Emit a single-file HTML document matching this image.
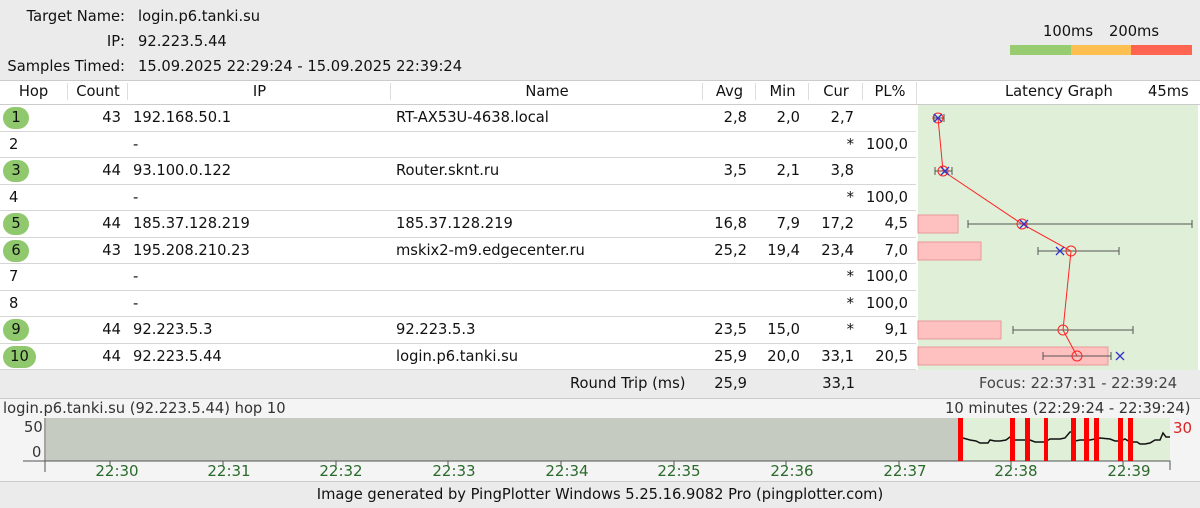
<!DOCTYPE html><html><head><meta charset="utf-8"><style>
body{margin:0;width:1200px;height:508px;overflow:hidden;background:#ebebeb;font-family:"DejaVu Sans","Liberation Sans",sans-serif;font-size:14.7px;color:#111;position:relative}
.a{position:absolute;white-space:nowrap}
.r{text-align:right}
.c{text-align:center}
.row{position:absolute;left:0;width:916px;height:26px;background:#fff;border-bottom:1px solid #d6d6d6;box-sizing:border-box}
.hop{position:absolute;left:3px;top:2px;width:26px;height:22px;border-radius:12px;background:#8fc86d;text-align:center;line-height:22px}
</style></head><body>
<div class="a r" style="right:1075px;top:8px">Target Name:</div>
<div class="a r" style="right:1075px;top:33px">IP:</div>
<div class="a r" style="right:1075px;top:58px">Samples Timed:</div>
<div class="a" style="left:138px;top:8px">login.p6.tanki.su</div>
<div class="a" style="left:138px;top:33px">92.223.5.44</div>
<div class="a" style="left:138px;top:58px">15.09.2025 22:29:24 - 15.09.2025 22:39:24</div>
<div class="a" style="left:1043px;top:23px">100ms</div><div class="a" style="left:1109px;top:23px">200ms</div>
<div class="a" style="left:1010px;top:45px;width:61px;height:10px;background:#97cc70"></div>
<div class="a" style="left:1071px;top:45px;width:60px;height:10px;background:#fdbf4f"></div>
<div class="a" style="left:1131px;top:45px;width:61px;height:10px;background:#fe6450"></div>
<div class="a" style="left:0;top:80px;width:1200px;height:25px;background:#fff;border-top:1px solid #ccc;border-bottom:1px solid #ccc;box-sizing:border-box"></div>
<div class="a c" style="left:0;width:67px;top:83px">Hop</div>
<div class="a c" style="left:67px;width:60px;top:83px;border-left:1px solid #ddd">Count</div>
<div class="a c" style="left:127px;width:263px;top:83px;border-left:1px solid #ddd">IP</div>
<div class="a c" style="left:390px;width:312px;top:83px;border-left:1px solid #ddd">Name</div>
<div class="a c" style="left:702px;width:53px;top:83px;border-left:1px solid #ddd">Avg</div>
<div class="a c" style="left:755px;width:53px;top:83px;border-left:1px solid #ddd">Min</div>
<div class="a c" style="left:808px;width:54px;top:83px;border-left:1px solid #ddd">Cur</div>
<div class="a c" style="left:862px;width:54px;top:83px;border-left:1px solid #ddd">PL%</div>
<div class="a" style="left:916px;top:82px;height:22px;border-left:1px solid #ddd"></div>
<div class="a" style="left:1005px;top:83px">Latency Graph</div><div class="a" style="left:1148px;top:83px">45ms</div>
<div id="rows"></div>
<div class="a" style="left:916px;top:105px;width:284px;height:265px;background:#fff"></div>
<div class="a" style="left:918px;top:105px;width:280px;height:265px;background:#e0efd8"></div>
<svg class="a" style="left:0;top:0" width="1200" height="508">
<g fill="#ffc0c0" stroke="#e89a9a"><rect x="918" y="215" width="40" height="18"/><rect x="918" y="242" width="63" height="18"/><rect x="918" y="321" width="83" height="18"/><rect x="918" y="347" width="190" height="18"/></g>
<g stroke="#555" stroke-width="1"><path d="M934 118H944M935 171H952M968 224H1192M1038 251H1119M1013 330H1133M1043 356H1111M934 114v8M944 114v8M935 167v8M952 167v8M968 220v8M1192 220v8M1038 247v8M1119 247v8M1013 326v8M1133 326v8M1043 352v8M1111 352v8"/></g>
<polyline fill="none" stroke="#f22" points="938,118 943,171 1022,224 1071,251 1063,330 1077,356"/>
<g fill="none" stroke="#f22"><circle cx="938" cy="118" r="5"/><circle cx="943" cy="171" r="5"/><circle cx="1022" cy="224" r="5"/><circle cx="1071" cy="251" r="5"/><circle cx="1063" cy="330" r="5"/><circle cx="1077" cy="356" r="5"/></g>
<g stroke="#33c" stroke-width="1.3"><path d="M934 114l8 8M942 114l-8 8M941 167l8 8M949 167l-8 8M1020 220l8 8M1028 220l-8 8M1056 247l8 8M1064 247l-8 8M1116 352l8 8M1124 352l-8 8"/></g>
</svg>
<div class="a" style="left:0;top:370px;width:1200px;height:28px;background:#ebebeb"></div>
<div class="a" style="left:570px;top:375px">Round Trip (ms)</div>
<div class="a r" style="right:453px;top:375px">25,9</div><div class="a r" style="right:345px;top:375px">33,1</div>
<div class="a" style="left:979px;top:375px;color:#444">Focus: 22:37:31 - 22:39:24</div>
<div class="a" style="left:0;top:398px;width:1200px;height:84px;background:#f4f4f4;border-top:1px solid #ccc;border-bottom:1px solid #ccc;box-sizing:border-box"></div>
<div class="a" style="left:3px;top:400px;color:#333">login.p6.tanki.su (92.223.5.44) hop 10</div>
<div class="a" style="left:945px;top:400px;color:#333">10 minutes (22:29:24 - 22:39:24)</div>
<div class="a" style="left:24px;top:419px;color:#333">50</div><div class="a" style="left:32px;top:444px;color:#333">0</div>
<div class="a" style="left:1173px;top:419px;color:#d22;font-size:15px">30</div>
<svg class="a" style="left:0;top:0" width="1200" height="508">
<rect x="46" y="418" width="912" height="43" fill="#c5cbc0"/>
<rect x="958" y="418" width="212" height="43" fill="#e0efd8"/>
<path d="M45 418V472M23 461H1170v9" stroke="#555" fill="none"/>
<polyline fill="none" stroke="#111" stroke-width="1.5" points="963,438 970,440 976,441 980,443 988,443 990,440 995,441 1000,441 1006,440 1010,437 1015,440 1030,440 1035,442 1045,442 1050,439 1060,439 1065,438 1070,432 1073,432 1075,441 1080,440 1090,440 1095,439 1100,438 1110,439 1115,441 1120,441 1125,439 1130,442 1137,442 1140,444 1145,444 1150,443 1155,440 1160,440 1163,433 1166,437 1170,437"/>
<g fill="#f00"><rect x="958" y="418" width="5" height="43"/><rect x="1010" y="418" width="5" height="43"/><rect x="1025" y="418" width="5" height="43"/><rect x="1044" y="418" width="4" height="43"/><rect x="1071" y="418" width="5" height="43"/><rect x="1084" y="418" width="5" height="43"/><rect x="1094" y="418" width="5" height="43"/><rect x="1118" y="418" width="5" height="43"/><rect x="1128" y="418" width="5" height="43"/></g>
<g stroke="#555"><path d="M110 461v5M223 461v5M336 461v5M448 461v5M561 461v5M674 461v5M786 461v5M899 461v5M1011 461v5M1123 461v5"/></g>
<g fill="#2a6a2a" font-family="DejaVu Sans" font-size="15" text-anchor="middle"><text x="117" y="476">22:30</text><text x="229" y="476">22:31</text><text x="341" y="476">22:32</text><text x="454" y="476">22:33</text><text x="567" y="476">22:34</text><text x="679" y="476">22:35</text><text x="792" y="476">22:36</text><text x="905" y="476">22:37</text><text x="1016" y="476">22:38</text><text x="1129" y="476">22:39</text></g>
</svg>
<div class="a c" style="left:0;width:1200px;top:486px">Image generated by PingPlotter Windows 5.25.16.9082 Pro (pingplotter.com)</div>
<script>
var d=[[1,43,"192.168.50.1","RT-AX53U-4638.local","2,8","2,0","2,7",""],[2,"","-","","","","*","100,0"],[3,44,"93.100.0.122","Router.sknt.ru","3,5","2,1","3,8",""],[4,"","-","","","","*","100,0"],[5,44,"185.37.128.219","185.37.128.219","16,8","7,9","17,2","4,5"],[6,43,"195.208.210.23","mskix2-m9.edgecenter.ru","25,2","19,4","23,4","7,0"],[7,"","-","","","","*","100,0"],[8,"","-","","","","*","100,0"],[9,44,"92.223.5.3","92.223.5.3","23,5","15,0","*","9,1"],[10,44,"92.223.5.44","login.p6.tanki.su","25,9","20,0","33,1","20,5"]];
var h="";d.forEach(function(r,i){var t=Math.round(105+i*26.5);var ht=Math.round(105+(i+1)*26.5)-t;var g=r[1]!=="";h+='<div class="row" style="top:'+t+'px;height:'+ht+'px">'+(g?'<div class="hop"'+(r[0]==10?' style="width:33px"':'')+'>'+r[0]+'</div>':'<div class="a" style="left:9px;top:4px">'+r[0]+'</div>')+'<div class="a r" style="right:795px;top:4px">'+r[1]+'</div><div class="a" style="left:133px;top:4px">'+r[2]+'</div><div class="a" style="left:396px;top:4px">'+r[3]+'</div><div class="a r" style="right:169px;top:4px">'+r[4]+'</div><div class="a r" style="right:116px;top:4px">'+r[5]+'</div><div class="a r" style="right:62px;top:4px">'+r[6]+'</div><div class="a r" style="right:8px;top:4px">'+r[7]+'</div></div>'});
document.getElementById("rows").innerHTML=h;
</script>
</body></html>
